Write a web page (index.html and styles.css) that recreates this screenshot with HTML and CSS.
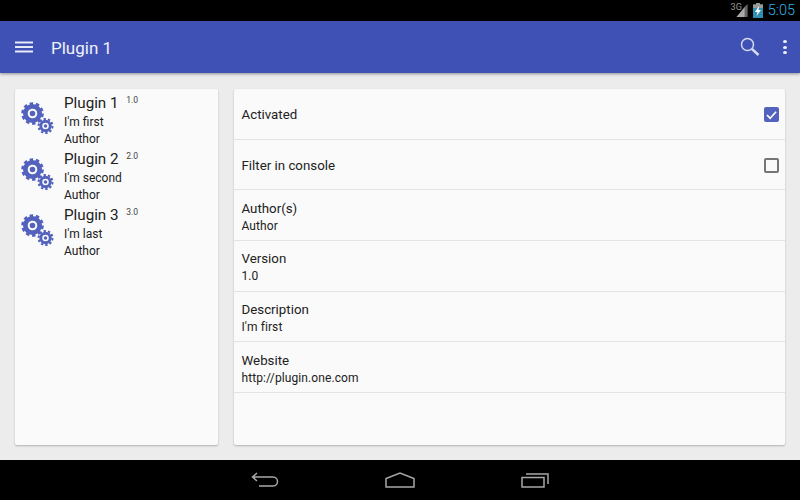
FILE: index.html
```html
<!DOCTYPE html>
<html lang="en">
<head>
    <meta charset="UTF-8">
    <title>Plugin 1</title>
    <link rel="stylesheet" href="styles.css">
</head>
<body>
    <svg class="defs" width="0" height="0">
        <symbol id="gears" viewBox="0 0 34 34">
            <g fill="none" stroke="#5362bd">
                <circle cx="12.5" cy="12.500" r="6.500" stroke-width="6"/>
                <circle cx="12.5" cy="12.500" r="10" stroke-width="2.600" stroke-dasharray="3.500 2.780"/>
                <circle cx="12.5" cy="12.500" r="3.800" stroke="#fafafa" stroke-width="2" fill="#5362bd"/>
                <circle cx="25.5" cy="25" r="4.400" stroke-width="3.600"/>
                <circle cx="25.5" cy="25" r="7" stroke-width="2" stroke-dasharray="2.400 1.999"/>
                <circle cx="25.5" cy="25" r="2.500" stroke="#fafafa" stroke-width="1.500" fill="#5362bd"/>
            </g>
        </symbol>
    </svg>

    <div class="status-bar">
        <span class="net">3G</span>
        <svg class="signal" width="13" height="13" viewBox="0 0 13 14">
            <path d="M12 0v14H9V3z" fill="#666"/>
            <path d="M9 3v11H0z" fill="#aaa"/>
        </svg>
        <svg class="battery" width="10" height="15" viewBox="0 0 10 15">
            <path d="M3 0h4v1.500h3V15H0V1.500h3z" fill="#2f8fb0"/>
            <path d="M3 0h4v1.500h3V5H0V1.500h3z" fill="#9a9a9a"/>
            <path d="M6 3L2 9h2.500L3.500 13 8 7H5.500z" fill="#fff"/>
        </svg>
        <span class="clock">5:05</span>
    </div>

    <header class="toolbar">
        <svg class="menu" width="18" height="12" viewBox="0 0 18 12">
            <path d="M0 1.500h18M0 6h18M0 10.500h18" stroke="#e8eaf6" stroke-width="2"/>
        </svg>
        <h1>Plugin 1</h1>
        <svg class="search" width="20" height="20" viewBox="0 0 20 20" fill="none" stroke="#d5d9f0">
            <circle cx="7.500" cy="7.500" r="6" stroke-width="1.500"/>
            <path d="M12 12l6.500 6" stroke-width="2.500"/>
        </svg>
        <div class="overflow"><i></i><i></i><i></i></div>
    </header>

    <main class="content">
        <section class="card plugin-list">
            <div class="plugin">
                <svg class="gears"><use href="#gears"/></svg>
                <div>
                    <div class="plugin-name">Plugin 1 <small>1.0</small></div>
                    <div class="plugin-line">I'm first</div>
                    <div class="plugin-line">Author</div>
                </div>
            </div>
            <div class="plugin">
                <svg class="gears"><use href="#gears"/></svg>
                <div>
                    <div class="plugin-name">Plugin 2 <small>2.0</small></div>
                    <div class="plugin-line">I'm second</div>
                    <div class="plugin-line">Author</div>
                </div>
            </div>
            <div class="plugin">
                <svg class="gears"><use href="#gears"/></svg>
                <div>
                    <div class="plugin-name">Plugin 3 <small>3.0</small></div>
                    <div class="plugin-line">I'm last</div>
                    <div class="plugin-line">Author</div>
                </div>
            </div>
        </section>

        <section class="card details">
            <div class="row row-check">
                <span class="row-title">Activated</span>
                <span class="checkbox checked">
                    <svg width="12" height="10" viewBox="0 0 12 10"><path d="M1 5l3.500 3.500L11 1.500" fill="none" stroke="#fff" stroke-width="1.800"/></svg>
                </span>
            </div>
            <div class="row row-check">
                <span class="row-title">Filter in console</span>
                <span class="checkbox"></span>
            </div>
            <div class="row">
                <span class="row-title">Author(s)</span>
                <span class="row-value">Author</span>
            </div>
            <div class="row">
                <span class="row-title">Version</span>
                <span class="row-value">1.0</span>
            </div>
            <div class="row">
                <span class="row-title">Description</span>
                <span class="row-value">I'm first</span>
            </div>
            <div class="row">
                <span class="row-title">Website</span>
                <span class="row-value">http://plugin.one.com</span>
            </div>
        </section>
    </main>

    <nav class="nav-bar">
        <svg width="28" height="16" viewBox="0 0 28 16" fill="none" stroke="#a8a8a8" stroke-width="1.500">
            <path d="M6 1L1.500 5l4.500 4M1.500 5H22c6 0 6 9 0 9H8"/>
        </svg>
        <svg width="30" height="16" viewBox="0 0 30 16" fill="none" stroke="#a8a8a8" stroke-width="1.500">
            <path d="M1 15V6.500L15 1l14 5.500V15z"/>
        </svg>
        <svg width="28" height="16" viewBox="0 0 28 16" fill="none" stroke="#a8a8a8" stroke-width="1.500">
            <path d="M1 5.500h22V15H1zM5 2h22v10"/>
        </svg>
    </nav>
</body>
</html>
```

FILE: styles.css
```css
body {
    margin: 0;
    width: 800px;
    height: 500px;
    display: flex;
    flex-direction: column;
    overflow: hidden;
    font-family: 'Roboto', sans-serif;
    background-color: #ececec;
    color: #212121;
}

.defs {
    display: none;
}

.status-bar {
    height: 21px;
    flex: none;
    display: flex;
    align-items: center;
    justify-content: flex-end;
    padding-right: 5px;
    background-color: #000;
}

.net {
    font-size: 9px;
    color: #999;
    margin: -8px -6px 0 0;
}

.signal {
    margin-right: 4px;
}

.battery {
    margin-right: 5px;
}

.clock {
    font-size: 14.500px;
    font-weight: 300;
    color: #33b5e5;
}

.toolbar {
    height: 52px;
    flex: none;
    display: flex;
    align-items: center;
    padding: 0 13px 0 15px;
    background-color: #3f51b5;
    box-shadow: 0 1px 3px rgba(0, 0, 0, 0.4);
    z-index: 1;
}

.toolbar h1 {
    flex: 1;
    margin: 2px 0 0 18px;
    font-size: 17px;
    font-weight: 400;
    color: #f0f1fa;
}

.search {
    margin-right: 23px;
    margin-top: 0;
}

.overflow {
    display: flex;
    flex-direction: column;
    gap: 2.500px;
}

.overflow i {
    width: 4px;
    height: 3px;
    border-radius: 50%;
    background-color: #f0f1fa;
}

.content {
    flex: 1;
    display: flex;
    gap: 16px;
    padding: 16px 15px 15px;
}

.card {
    background-color: #fafafa;
    border-radius: 2px;
    box-shadow: 0 1px 2px rgba(0, 0, 0, 0.25);
}

.plugin-list {
    width: 203px;
    flex: none;
    padding-top: 3px;
}

.plugin {
    height: 56px;
    display: flex;
    padding-left: 5px;
}

.gears {
    width: 34px;
    height: 34px;
    margin: 9px 10px 0 0;
    flex: none;
}

.plugin-name {
    font-size: 15.200px;
    line-height: 17px;
    margin-bottom: 2px;
}

.plugin-name small {
    font-size: 8.500px;
    vertical-align: 5px;
    margin-left: 4px;
    color: #424242;
}

.plugin-line {
    font-size: 12px;
    line-height: 17px;
}

.details {
    flex: 1;
}

.row {
    height: 50.670px;
    box-sizing: border-box;
    display: flex;
    flex-direction: column;
    justify-content: center;
    padding: 4px 6px 0 7.500px;
    border-bottom: 1px solid #e4e4e4;
}

.row-check {
    flex-direction: row;
    align-items: center;
    justify-content: space-between;
    padding-top: 2px;
}

.row-title {
    font-size: 13.300px;
    line-height: 17px;
}

.row-value {
    font-size: 12px;
    line-height: 17px;
    margin-top: 1px;
    letter-spacing: 0.100px;
}

.checkbox {
    width: 15px;
    height: 15px;
    box-sizing: border-box;
    display: flex;
    align-items: center;
    justify-content: center;
    border: 2px solid #757575;
    border-radius: 2px;
}

.checkbox.checked {
    background-color: #5362bd;
    border-color: #5362bd;
}

.nav-bar {
    height: 40px;
    flex: none;
    display: flex;
    align-items: center;
    justify-content: center;
    gap: 106px;
    background-color: #000;
}
```
